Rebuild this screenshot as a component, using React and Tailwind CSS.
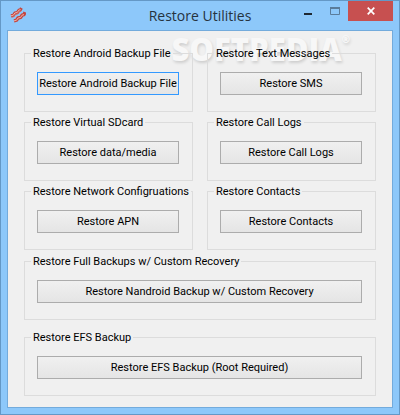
import clsx from 'clsx'

const groups = [
  { title: 'Restore Android Backup File', action: 'Restore Android Backup File', focused: true },
  { title: 'Restore Text Messages', action: 'Restore SMS' },
  { title: 'Restore Virtual SDcard', action: 'Restore data/media' },
  { title: 'Restore Call Logs', action: 'Restore Call Logs' },
  { title: 'Restore Network Configruations', action: 'Restore APN' },
  { title: 'Restore Contacts', action: 'Restore Contacts' },
]

function BaconIcon() {
  return (
    <svg className="w-4 h-4" viewBox="0 0 16 16" fill="none" strokeLinejoin="round">
      <path d="M1 8.800l2.400-.6 1.400-2.200 2.600-.6L8.800 3.200l1.800-.6L11.400 1" stroke="#c4453f" strokeWidth="3" />
      <path d="M4 13.800l2.600-.6L8 11l2.700-.6 1.400-2.200 1.900-.6 1-2.400" stroke="#c4453f" strokeWidth="3.400" />
      <path d="M1.600 10.200l2.400-.6 1.400-2.200 2.600-.6 1.400-2.200 2-.6" stroke="#d2625a" strokeWidth="1" />
      <path d="M.8 8.800l2.600-.6 1.400-2.200 2.600-.6 1.400-2.200 1.800-.6" stroke="#f0bdb2" strokeWidth=".9" />
      <path d="M4 13.800l2.600-.6L8 11l2.700-.6 1.400-2.200 1.900-.6" stroke="#f0bdb2" strokeWidth=".9" />
    </svg>
  )
}

function TitleBar() {
  return (
    <header className="relative flex h-[29px] items-start justify-between">
      <div className="pl-[9px] pt-[6px]">
        <BaconIcon />
      </div>
      <h1 className="absolute inset-x-0 top-[3px] text-center font-['Open_Sans',sans-serif] text-[14px] leading-6 text-[#26333f]">
        Restore Utilities
      </h1>
      <div className="relative flex">
        <button aria-label="Minimize" className="flex h-5 w-7 items-center justify-center">
          <svg width="10" height="10" viewBox="0 0 10 10">
            <path d="M1 7h8v2H1z" fill="#1e2832" />
          </svg>
        </button>
        <button aria-label="Maximize" className="flex h-5 w-[26px] items-center justify-center">
          <svg width="10" height="10" viewBox="0 0 10 10">
            <path d="M.5 1.5h9v7h-9z" fill="none" stroke="#5a7c9b" />
            <path d="M0 1h10v2H0z" fill="#5a7c9b" />
          </svg>
        </button>
        <button aria-label="Close" className="mr-[6px] flex h-5 w-[45px] items-center justify-center bg-[#c75050]">
          <svg width="8" height="8" viewBox="0 0 8 8">
            <path d="M.7.7l6.6 6.6M7.3.7L.7 7.3" stroke="#fff" strokeWidth="1.7" />
          </svg>
        </button>
      </div>
    </header>
  )
}

function Group({ title, action, focused }) {
  return (
    <fieldset className="min-w-0 border border-[#dcdcdc] pb-4 pl-3 pr-[13px]">
      <legend className="-ml-[6px] whitespace-nowrap px-[2px] leading-[13px]">{title}</legend>
      <button
        className={clsx(
          'mt-3 block h-[23px] w-full whitespace-nowrap border bg-linear-to-b from-[#f0f0f0] to-[#e5e5e5] pt-0.5 text-center',
          focused ? 'border-[#3399ff]' : 'border-[#acacac]'
        )}
      >
        {action}
      </button>
    </fieldset>
  )
}

export default function App() {
  return (
    <div className="min-h-screen border border-[#6498c6] bg-[#8dc8fa] font-[Roboto,sans-serif] text-[11px] text-black">
      <TitleBar />
      <main className="relative mx-[6px] mb-[6px] border border-[#73abdc] bg-[#f0f0f0] px-4 pb-[11px] pt-4">
        <div className="pointer-events-none absolute right-[42px] top-0 flex font-['Open_Sans',sans-serif] text-[31px] font-extrabold leading-9 text-[#f7f7f7] [text-shadow:1px_2px_3px_rgb(0_0_0/0.14)]">
          SOFTPEDIA
          <span className="text-[10px] leading-4">®</span>
        </div>
        <div className="relative grid grid-cols-2 gap-x-[14px] gap-y-1">
          {groups.map((group) => (
            <Group key={group.title} {...group} />
          ))}
        </div>
        <div className="mt-[5px] grid gap-[11px]">
          <Group title="Restore Full Backups w/ Custom Recovery" action="Restore Nandroid Backup w/ Custom Recovery" />
          <Group title="Restore EFS Backup" action="Restore EFS Backup (Root Required)" />
        </div>
      </main>
    </div>
  )
}
